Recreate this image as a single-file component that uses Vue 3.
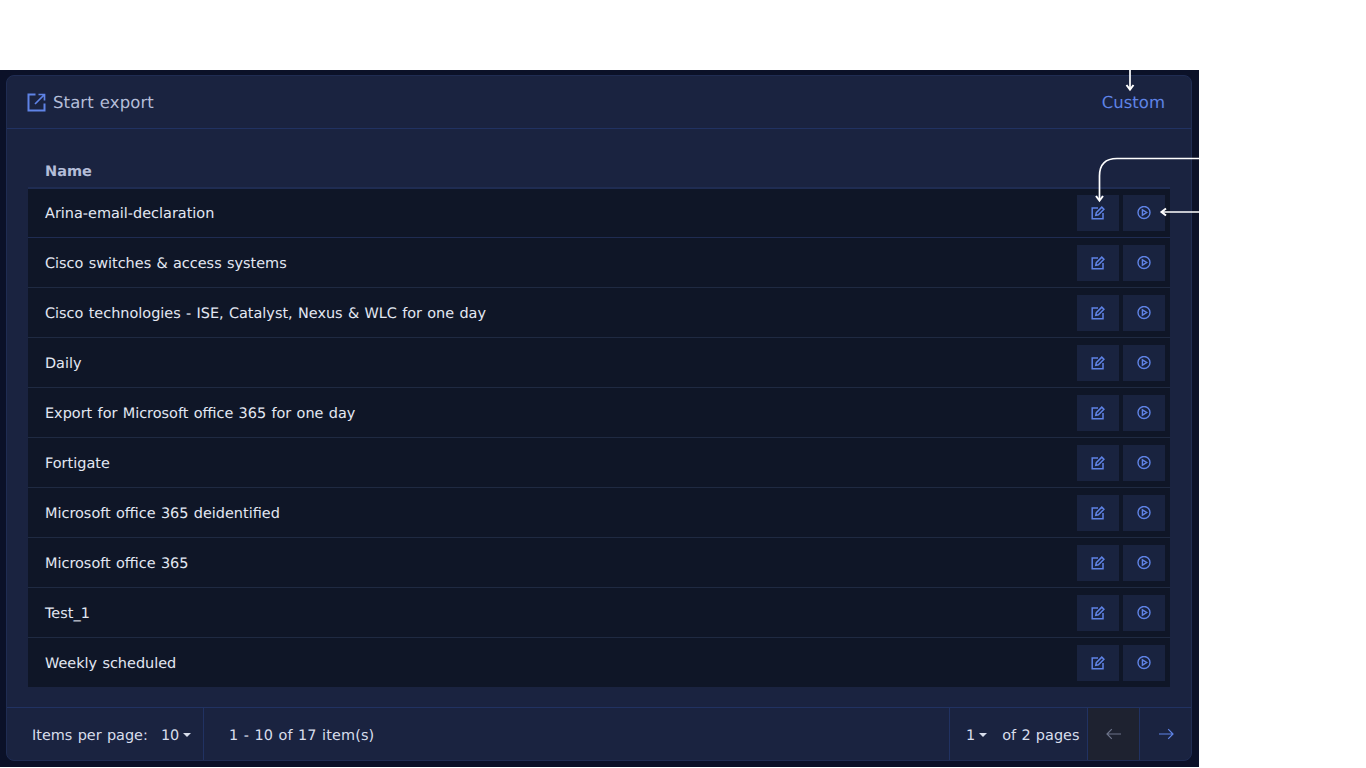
<script setup>
const rows = [
  'Arina-email-declaration',
  'Cisco switches & access systems',
  'Cisco technologies - ISE, Catalyst, Nexus & WLC for one day',
  'Daily',
  'Export for Microsoft office 365 for one day',
  'Fortigate',
  'Microsoft office 365 deidentified',
  'Microsoft office 365',
  'Test_1',
  'Weekly scheduled',
]
</script>

<template>
  <div class="stage">
    <div class="shell">
      <section class="card">
        <header class="head">
          <div class="title">
            <svg class="export" width="19" height="19" viewBox="0 0 19 19" fill="none" stroke="#5f83e6" stroke-width="2">
              <path d="M8.500 1.500H1.500v16h16v-7" />
              <path d="M8 11 17 2M11.500 1.500h6v6" stroke-width="1.700" />
            </svg>
            <span>Start export</span>
          </div>
          <a class="custom">Custom</a>
        </header>
        <div class="body">
          <div class="th">Name</div>
          <div v-for="name in rows" :key="name" class="row">
            <span class="name">{{ name }}</span>
            <span class="btn">
              <svg width="14" height="14" viewBox="0 0 14 14" fill="none" stroke="#5f83e6" stroke-width="1.500">
                <path d="M7 2H1.200v10.800H12V7" />
                <path d="M4.800 9.200 5.300 6.600 10.800 1.100 12.900 3.200 7.400 8.700Z" />
              </svg>
            </span>
            <span class="btn">
              <svg width="14" height="14" viewBox="0 0 14 14" fill="none" stroke="#5f83e6" stroke-width="1.400">
                <circle cx="7" cy="6.500" r="6" />
                <path d="M5.400 3.800v5.400L9.700 6.500Z" />
              </svg>
            </span>
          </div>
        </div>
        <footer class="foot">
          <div class="per">
            <span>Items per page:</span>
            <span class="sel">10<i class="caret"></i></span>
          </div>
          <div class="range">1 - 10 of 17 item(s)</div>
          <div class="pages">
            <span class="sel">1<i class="caret"></i></span>
            <span>of 2 pages</span>
          </div>
          <div class="nav disabled">
            <svg width="16" height="12" viewBox="0 0 16 12" fill="none" stroke="#6c7389" stroke-width="1.200"><path d="M15 6H1M5.800 1.200 1 6l4.800 4.800" /></svg>
          </div>
          <div class="nav">
            <svg width="16" height="12" viewBox="0 0 16 12" fill="none" stroke="#5f83e6" stroke-width="1.200"><path d="M1 6h14M10.200 1.200 15 6l-4.800 4.800" /></svg>
          </div>
        </footer>
      </section>

      <svg class="arrows" width="1199" height="697" viewBox="0 70 1199 697" fill="none" stroke="#fff" stroke-width="1.700">
        <path d="M1130 70V88" />
        <path d="M1126.500 85 1130 89.500 1133.500 85" stroke-width="2" />
        <path d="M1199 158.500H1117Q1099.500 158.500 1099.500 176V199" />
        <path d="M1096 196 1099.500 200.500 1103 196" stroke-width="2" />
        <path d="M1199 212H1163" />
        <path d="M1166 208.500 1161.500 212 1166 215.500" stroke-width="2" />
      </svg>
    </div>
  </div>
</template>

<style scoped>
.stage {
  width: 1366px;
  height: 768px;
  padding-top: 70px;
  box-sizing: border-box;
  background: #fff;
  overflow: hidden;
  font-family: "DejaVu Sans", sans-serif;
  font-size: 14.450px;
  word-spacing: 0.700px;
  text-rendering: geometricPrecision;
}
.shell {
  position: relative;
  width: 1199px;
  height: 697px;
  padding: 5px 7px 5px 6px;
  box-sizing: border-box;
  background: #0b1128;
}
.card {
  display: flex;
  flex-direction: column;
  height: 686px;
  box-sizing: border-box;
  background: #1a2340;
  border: 1px solid #1f2c52;
  border-radius: 8px;
  overflow: hidden;
}
.head {
  display: flex;
  align-items: center;
  justify-content: space-between;
  height: 53px;
  flex: none;
  box-sizing: border-box;
  padding: 0 26px 0 20px;
  border-bottom: 1px solid #213262;
}
.title {
  display: flex;
  align-items: center;
  gap: 7px;
  font-size: 16.500px;
  letter-spacing: 0.100px;
  color: #b4bdd8;
}
.custom {
  font-size: 16.500px;
  padding-top: 1px;
  color: #5f83e6;
}
.body {
  flex: 1;
  padding: 30px 21px 0;
}
.th {
  height: 30px;
  padding-left: 17px;
  box-sizing: border-box;
  font-weight: 700;
  font-size: 14.500px;
  line-height: 27px;
  color: #b4bdd8;
  border-bottom: 2px solid #1f2c52;
}
.row {
  display: flex;
  align-items: center;
  gap: 4px;
  height: 50px;
  box-sizing: border-box;
  padding: 6px 5px 6px 17px;
  background: #0f1627;
  border-bottom: 1px solid #1f2a42;
}
.row:nth-child(2) {
  height: 49px;
  border-bottom-color: #1f2c52;
}
.row:last-child {
  height: 49px;
  border-bottom: 0;
}
.name {
  flex: 1;
  padding-top: 2px;
  color: #e3e8f3;
}
.btn {
  display: flex;
  align-items: center;
  justify-content: center;
  width: 42px;
  height: 36px;
  background: #19233f;
}
.foot {
  display: flex;
  align-items: center;
  height: 53px;
  flex: none;
  box-sizing: border-box;
  border-top: 1px solid #213262;
  color: #d8deec;
}
.per {
  display: flex;
  align-items: center;
  gap: 13px;
  width: 197px;
  box-sizing: border-box;
  height: 100%;
  padding: 4px 0 0 25px;
  border-right: 1px solid #213262;
}
.sel {
  display: inline-flex;
  align-items: center;
  gap: 4px;
}
.caret {
  width: 0;
  height: 0;
  border-left: 4px solid transparent;
  border-right: 4px solid transparent;
  border-top: 4px solid #d8deec;
  margin-top: -2px;
}
.range {
  flex: 1;
  padding: 4px 0 0 25px;
  letter-spacing: 0.120px;
}
.pages {
  display: flex;
  align-items: center;
  gap: 15px;
  height: 100%;
  width: 138px;
  box-sizing: border-box;
  padding: 4px 0 0 16px;
  border-left: 1px solid #213262;
}
.nav {
  display: flex;
  align-items: center;
  justify-content: center;
  width: 52px;
  height: 100%;
  box-sizing: border-box;
  border-left: 1px solid #213262;
}
.nav.disabled {
  background: #1e2230;
}
.arrows {
  position: absolute;
  left: 0;
  top: 0;
  pointer-events: none;
}
</style>
